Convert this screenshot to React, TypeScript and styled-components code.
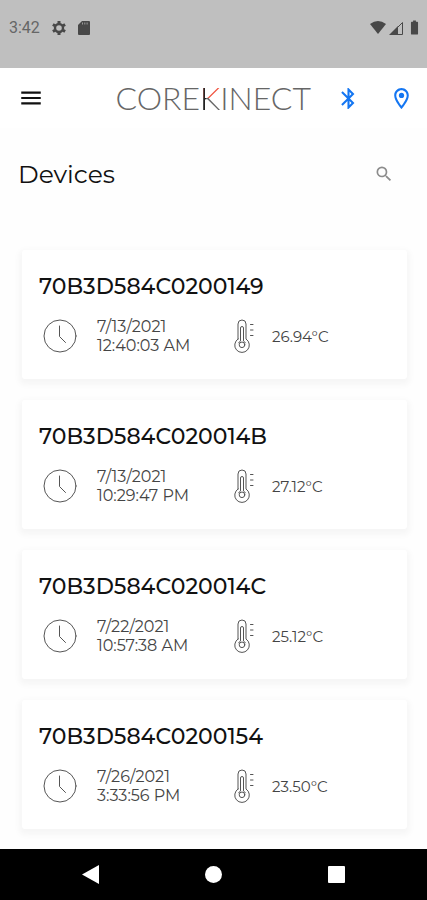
import React from "react";
import styled, { createGlobalStyle } from "styled-components";
import {
  MdBatteryFull,
  MdBluetooth,
  MdMenu,
  MdOutlineLocationOn,
  MdSearch,
} from "react-icons/md";

const GlobalStyle = createGlobalStyle`
  *, *::before, *::after { box-sizing: border-box; }
  body {
    margin: 0;
    background: #fefefe;
    color: #111;
    font-family: Montserrat, Inter, sans-serif;
  }
`;

const Screen = styled.div`
  display: flex;
  flex-direction: column;
  min-height: 100vh;
`;

const StatusBar = styled.div`
  display: flex;
  justify-content: space-between;
  height: 68px;
  padding: 16px 4px 0 9px;
  background: #bfbfbf;
  color: #484848;
`;

const StatusGroup = styled.div<{ $gap: number }>`
  display: flex;
  align-items: center;
  gap: ${(p) => p.$gap}px;
  height: 23px;
`;

const Clock = styled.span`
  font: 400 16px/23px Roboto, sans-serif;
  color: #666;
`;

const Header = styled.header`
  display: flex;
  align-items: center;
  height: 60px;
  padding: 0 13px 0 18px;
  background: #fff;
`;

const IconButton = styled.button<{ $color: string }>`
  display: flex;
  align-items: center;
  justify-content: center;
  padding: 0;
  border: 0;
  background: none;
  color: ${(p) => p.$color};
  cursor: pointer;
`;

const Brand = styled.a`
  margin-left: auto;
  color: #666;
  font: 300 32px/60px Lato, sans-serif;
  text-decoration: none;
`;

const BrandAccent = styled.span`
  background:
    linear-gradient(90deg, #222 0 6px, transparent 6px),
    linear-gradient(180deg, #f0503c 0 52%, #666 52%);
  background-clip: text;
  -webkit-background-clip: text;
  color: transparent;
`;

const HeaderActions = styled.div`
  display: flex;
  gap: 28px;
  margin-left: 25px;
`;

const Main = styled.main`
  flex: 1;
  padding: 29px 20px 20px 22px;
`;

const TitleRow = styled.div`
  display: flex;
  align-items: center;
  justify-content: space-between;
  height: 34px;
  margin: 0 13px 59px -4px;
`;

const Title = styled.h1`
  margin: 0;
  font-size: 25px;
  font-weight: 400;
  line-height: 34px;
`;

const DeviceList = styled.ul`
  display: grid;
  gap: 21px;
  margin: 0;
  padding: 0;
  list-style: none;
`;

const Card = styled.li`
  height: 129px;
  padding: 23px 17px 0;
  border-radius: 3px;
  background: #fff;
  box-shadow: 0 3px 6px 3px rgba(0, 0, 0, 0.035);
`;

const DeviceId = styled.h2`
  margin: 0 0 16px;
  font-size: 22px;
  font-weight: 500;
  line-height: 28px;
`;

const Readings = styled.div`
  display: grid;
  grid-template-columns: 58px 133px 42px 1fr;
  align-items: center;
  color: #444;
  font-weight: 400;
  line-height: 19px;
`;

const ReadingIcon = styled.svg`
  display: block;
  margin-left: 4px;
  fill: none;
  stroke: #555;
  stroke-linecap: round;
`;

const Stamp = styled.time`
  display: block;
  font-size: 16px;
  white-space: pre-line;
`;

const Temperature = styled.span`
  font-size: 15px;
`;

const NavBar = styled.nav`
  display: flex;
  align-items: center;
  justify-content: space-around;
  height: 51px;
  padding: 0 29px;
  background: #000;
`;

const Gear = () => (
  <svg width="14" height="14" viewBox="0 0 14 14" aria-hidden="true">
    <g fill="none" stroke="currentColor">
      <circle cx="7" cy="7" r="4" strokeWidth="2.4" />
      <path
        strokeWidth="3"
        d="M7 0v2.4M7 11.6V14M.9 3.5L3 4.7M11 9.3l2.1 1.2M.9 10.5L3 9.3M11 4.7l2.1-1.2"
      />
    </g>
  </svg>
);

const SdCard = () => (
  <svg width="12" height="14" viewBox="0 0 12 14" aria-hidden="true">
    <path fill="currentColor" d="M4 0h7q1 0 1 1v12q0 1-1 1H1q-1 0-1-1V4z" />
    <path stroke="#9a9a9a" d="M4.5 1.5v2M6.8 1.5v2M9.1 1.5v2" />
  </svg>
);

const Wifi = () => (
  <svg width="16" height="13" viewBox="0 0 16 13" aria-hidden="true">
    <path fill="currentColor" d="M0 3Q8-3 16 3L8 13z" />
  </svg>
);

const Signal = () => (
  <svg width="14" height="14" viewBox="0 0 14 14" aria-hidden="true">
    <path fill="none" stroke="currentColor" d="M1.5 13.5h12v-12z" />
    <path fill="currentColor" d="M0 14L9 5v9z" />
  </svg>
);

const ClockFace = () => (
  <ReadingIcon width="34" height="34" viewBox="0 0 34 34" aria-hidden="true">
    <circle cx="17" cy="17" r="16" />
    <path d="M16.5 7v10.5l6 6" />
  </ReadingIcon>
);

const Thermometer = () => (
  <ReadingIcon width="20" height="34" viewBox="0 0 20 34" aria-hidden="true">
    <path d="M4 20V5a4 4 0 0 1 8 0v15a7.3 7.3 0 1 1-8 0z" />
    <path d="M6.5 21.5V9a1.5 1.5 0 0 1 3 0v12.5" />
    <circle cx="8" cy="25.8" r="2.8" />
    <path d="M6.5 21.8a4.5 4.5 0 0 0-1.8 2M9.5 21.8a4.5 4.5 0 0 1 1.8 2M16.5 5.5h2.5M16.5 11h2.5M16.5 16.5h2.5" />
  </ReadingIcon>
);

const devices = [
  { id: "70B3D584C0200149", date: "7/13/2021", time: "12:40:03 AM", temp: "26.94" },
  { id: "70B3D584C020014B", date: "7/13/2021", time: "10:29:47 PM", temp: "27.12" },
  { id: "70B3D584C020014C", date: "7/22/2021", time: "10:57:38 AM", temp: "25.12" },
  { id: "70B3D584C0200154", date: "7/26/2021", time: "3:33:56 PM", temp: "23.50" },
];

export default function App() {
  return (
    <>
      <GlobalStyle />
      <Screen>
        <StatusBar>
          <StatusGroup $gap={12}>
            <Clock>3:42</Clock>
            <Gear />
            <SdCard />
          </StatusGroup>
          <StatusGroup $gap={3}>
            <Wifi />
            <Signal />
            <MdBatteryFull size={17} />
          </StatusGroup>
        </StatusBar>
        <Header>
          <IconButton $color="#111" aria-label="Menu"><MdMenu size={26} /></IconButton>
          <Brand href="#" aria-label="COREKINECT">
            CORE<BrandAccent>K</BrandAccent>INECT
          </Brand>
          <HeaderActions>
            <IconButton $color="#1476f2" aria-label="Bluetooth"><MdBluetooth size={25} /></IconButton>
            <IconButton $color="#1476f2" aria-label="Location"><MdOutlineLocationOn size={25} /></IconButton>
          </HeaderActions>
        </Header>
        <Main>
          <TitleRow>
            <Title>Devices</Title>
            <IconButton $color="#8c8c8c" aria-label="Search"><MdSearch size={20} /></IconButton>
          </TitleRow>
          <DeviceList>
            {devices.map((d) => (
              <Card key={d.id}>
                <DeviceId>{d.id}</DeviceId>
                <Readings>
                  <ClockFace />
                  <Stamp>{d.date + "\n" + d.time}</Stamp>
                  <Thermometer />
                  <Temperature>{d.temp}°C</Temperature>
                </Readings>
              </Card>
            ))}
          </DeviceList>
        </Main>
        <NavBar>
          <IconButton $color="#fff" aria-label="Back">
            <svg width="17" height="19" viewBox="0 0 17 19"><path fill="currentColor" d="M0 9.5L17 0v19z" /></svg>
          </IconButton>
          <IconButton $color="#fff" aria-label="Home">
            <svg width="17" height="17" viewBox="0 0 17 17"><circle cx="8.5" cy="8.5" r="8.5" fill="currentColor" /></svg>
          </IconButton>
          <IconButton $color="#fff" aria-label="Recent apps">
            <svg width="17" height="17" viewBox="0 0 17 17"><rect width="17" height="17" rx="1" fill="currentColor" /></svg>
          </IconButton>
        </NavBar>
      </Screen>
    </>
  );
}
